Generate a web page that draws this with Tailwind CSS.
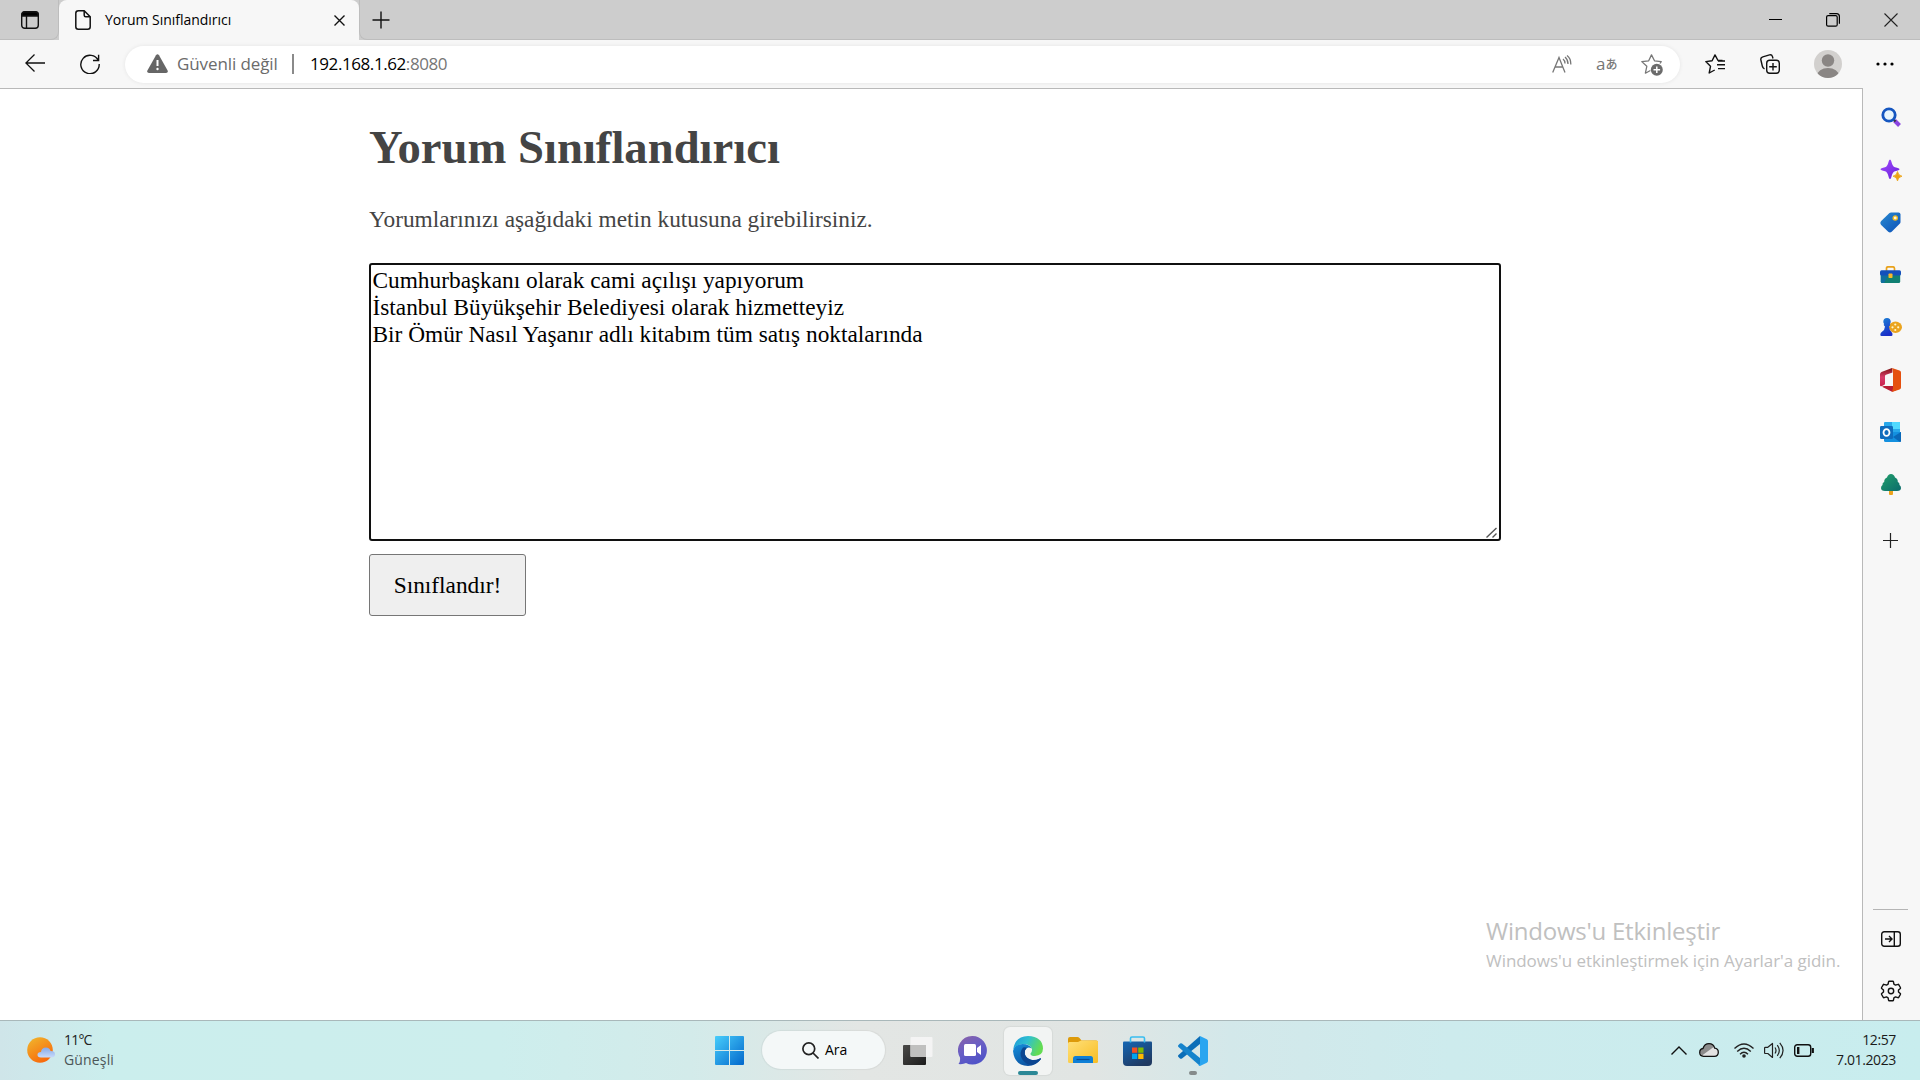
<!DOCTYPE html>
<html lang="tr">
<head>
<meta charset="utf-8">
<title>Yorum Sınıflandırıcı</title>
<script src="https://cdn.jsdelivr.net/npm/@tailwindcss/browser@4"></script>
</head>
<body class="flex h-[1080px] w-[1920px] flex-col overflow-hidden bg-white font-['Open_Sans',sans-serif] text-black">

<!-- Tab strip -->
<header class="flex h-10 shrink-0 items-center bg-[#cdcdcd]">
  <div class="flex h-10 w-[59px] items-center rounded-br-lg border-r border-b border-[#bdbdbd] pl-[21px]">
    <svg class="size-[18px]" viewBox="0 0 18 18" fill="none" stroke="#111" stroke-width="1.4"><rect x=".7" y=".7" width="16.6" height="16.6" rx="3"/><path d="M1 5V3.5Q1 1 3.500 1h11Q17 1 17 3.500V5z" fill="#000"/><path d="M5.500 5v12"/></svg>
  </div>
  <div class="flex h-10 w-[300px] items-center rounded-t-lg bg-[#f7f7f7] pl-4">
    <svg class="h-5 w-4" viewBox="0 0 16 20" fill="none" stroke="#111" stroke-width="1.5" stroke-linejoin="round"><path d="M3.500.8h5.700L15.200 6.800v9.900q0 2.500-2.500 2.500H3.300Q.8 19.200.8 16.700V3.300Q.8.800 3.500.8z"/><path d="M9.200.8v4.500q0 1.500 1.500 1.500h4.500"/></svg>
    <span class="ml-[14px] w-[229px] text-[14px] leading-5 tracking-[-0.02px] whitespace-nowrap">Yorum Sınıflandırıcı</span>
    <svg class="mt-px size-[11px]" viewBox="0 0 11 11" stroke="#111" stroke-width="1.4"><path d="M.5.5l10 10M10.500.5l-10 10"/></svg>
  </div>
  <div class="flex h-10 flex-1 items-center rounded-bl-lg border-b border-l border-[#bdbdbd]">
    <svg class="ml-3 size-[18px]" viewBox="0 0 18 18" stroke="#111" stroke-width="1.4"><path d="M9 .5v17M.5 9h17"/></svg>
    <div class="ml-auto flex items-center gap-[44px] pr-[22px]">
      <svg class="h-[14px] w-[13px]" viewBox="0 0 13 14"><path d="M0 6.500h13" stroke="#000"/></svg>
      <svg class="size-[14px]" viewBox="0 0 14 14" fill="none" stroke="#000" stroke-width="1.2"><rect x=".6" y="2.600" width="10.600" height="10.600" rx="1.500"/><path d="M3.300.6H10.500Q13.400.6 13.400 3.500v7.300"/></svg>
      <svg class="size-[14px]" viewBox="0 0 14 14" stroke="#222" stroke-width="1.1"><path d="M.5.5l13 13M13.500.5l-13 13"/></svg>
    </div>
  </div>
</header>

<!-- Toolbar -->
<nav class="flex h-12 shrink-0 items-center bg-[#f7f7f7] pl-[25px]">
  <svg class="mt-[-2px] h-[18px] w-5" viewBox="0 0 20 18" fill="none" stroke="#111" stroke-width="1.300"><path d="M20 9H.9M9.500.5L.9 9l8.600 8.500"/></svg>
  <svg class="ml-[35px] size-5" viewBox="0 0 20 20" fill="none" stroke="#111" stroke-width="1.400"><path d="M18.300 6.500A9.200 9.200 0 1 0 19.200 10M18.600.8v5.700h-5.600"/></svg>
  <div class="ml-[25px] flex h-[37px] w-[1555px] items-center rounded-full bg-white pl-[22px] shadow-[0_0_4px_rgba(0,0,0,0.08)]">
    <svg class="mb-px h-[19px] w-[21px]" viewBox="0 0 21 19"><path d="M9 1.200q1.500-2 3 0l8.600 15.300q.8 2.300-1.600 2.500H2Q-.4 18.800.4 16.500z" fill="#666"/><path d="M10.500 6v6" stroke="#fff" stroke-width="2"/><circle cx="10.500" cy="15" r="1.200" fill="#fff"/></svg>
    <span class="ml-[9px] w-[115px] text-[17px] leading-6 tracking-[-0.1px] whitespace-nowrap text-[#6b6b6b]">Güvenli değil</span>
    <span class="h-5 w-[2px] bg-[#8a8a8a]"></span>
    <span class="ml-4 text-[17px] leading-6 tracking-[-0.42px] whitespace-nowrap">192.168.1.62<span class="text-[#767676]">:8080</span></span>
    <div class="ml-auto flex items-center pr-[17px]">
      <svg class="h-[18px] w-5" viewBox="0 0 20 18" fill="none" stroke="#777" stroke-width="1.300"><path d="M.7 17.500L7 2.500l6 15M3 12h8.200M11 4q2 1.500 2 4.500M13 2q3 2.500 3 7M15 .5q4 3 3.800 9"/></svg>
      <span class="ml-6 flex h-5 w-[21px] items-center leading-5 text-[#777]"><span class="-mt-px text-[17px]">a</span><span class="text-[12px] font-['Noto_Sans_CJK_JP',sans-serif] font-medium">あ</span></span>
      <svg class="ml-6 mt-px size-[22px]" viewBox="0 0 22 22" fill="none" stroke="#777" stroke-width="1.300" stroke-linejoin="round"><path d="M19 9.500l1.200-1.900-6.700-.8L10.500.9 7.700 6.800.8 7.600l5 4.700-1.400 6.900 5-2.700"/><circle cx="15.800" cy="15.800" r="6" fill="#6b6b6b" stroke="none"/><path d="M15.800 12.500v6.600M12.500 15.800h6.600" stroke="#fff" stroke-width="1.500"/></svg>
    </div>
  </div>
  <svg class="ml-[25px] size-5" viewBox="0 0 20 20" fill="none" stroke="#111" stroke-width="1.400" stroke-linejoin="round"><path d="M17.500 6.500H13L10 .9 7.100 6.800.8 7.600l4.700 4.700L4.200 19l5.500-3M13 7h7M12 10.800h8M13 14.600h7"/></svg>
  <svg class="ml-[35px] size-5" viewBox="0 0 20 20" fill="none" stroke="#111" stroke-width="1.400"><path d="M4.500 15Q2.700 14 2.300 12L.9 6Q.3 3.500 2.800 2.800L9.500.9q2.300-.5 3 1.700L13 4.500"/><rect x="6.700" y="6.300" width="12.600" height="12.900" rx="3"/><path d="M13 9v7.500M9.200 12.750h7.600"/></svg>
  <svg class="ml-[34px] size-7" viewBox="0 0 28 28"><defs><clipPath id="av"><circle cx="14" cy="14" r="14"/></clipPath></defs><circle cx="14" cy="14" r="14" fill="#d2d0ce"/><g clip-path="url(#av)" fill="#8a8684"><circle cx="14" cy="10.500" r="6.200"/><ellipse cx="14" cy="26" rx="11" ry="8"/></g></svg>
  <svg class="ml-[34px] h-1 w-[18px]" viewBox="0 0 18 4"><circle cx="2" cy="2" r="1.600"/><circle cx="9" cy="2" r="1.600"/><circle cx="16" cy="2" r="1.600"/></svg>
</nav>

<!-- Page and sidebar -->
<div class="flex h-[932px] shrink-0">
  <main class="relative flex w-[1863px] flex-col items-start border-t border-r border-[#b9b9b9] pl-[369px] font-['Liberation_Serif',serif]">
    <h1 class="mt-[31px] text-[46.67px] leading-[55px] font-bold whitespace-nowrap text-[#444]">Yorum Sınıflandırıcı</h1>
    <p class="mt-[31px] text-[23.33px] leading-[27px] whitespace-nowrap text-[#444]">Yorumlarınızı aşağıdaki metin kutusuna girebilirsiniz.</p>
    <div class="relative mt-[30px] h-[278px] w-[1132px] rounded-[3px] border-2 border-[#101010] px-[1.500px] py-[2px] text-[23.33px] leading-[27px] whitespace-nowrap">
      <div>Cumhurbaşkanı olarak cami açılışı yapıyorum</div>
      <div>İstanbul Büyükşehir Belediyesi olarak hizmetteyiz</div>
      <div>Bir Ömür Nasıl Yaşanır adlı kitabım tüm satış noktalarında</div>
      <svg class="absolute right-[2px] bottom-px size-[11px]" viewBox="0 0 11 11" stroke="#555" stroke-width="1.400"><path d="M.5 10.500l10-9.500M6.500 10.500l4-4"/></svg>
    </div>
    <button class="mt-[13px] h-[62px] w-[157px] rounded-[3px] border border-[#767676] bg-[#efefef] text-[23.33px] whitespace-nowrap">Sınıflandır!</button>
    <div class="absolute right-[22px] bottom-[47px] w-[354px] font-['Open_Sans',sans-serif] whitespace-nowrap text-[#c0c0c0]">
      <div class="text-[24px] leading-[32px] tracking-[-0.23px]">Windows'u Etkinleştir</div>
      <div class="mt-[-2px] pt-[4px] text-[17px] leading-[24px] tracking-[-0.05px]">Windows'u etkinleştirmek için Ayarlar'a gidin.</div>
    </div>
  </main>
  <aside class="flex w-[57px] flex-col items-center bg-[#f7f7f7] pt-[3px] pr-[2px]">
    <div class="flex h-[52.5px] items-center"><svg class="size-5" viewBox="0 0 20 20"><path d="M13.500 13.500l5 5" stroke="#8b45e0" stroke-width="4"/><path d="M12 12l2.500 2.500" stroke="#333" stroke-width="2"/><circle cx="8" cy="8" r="6.200" fill="#e8f6fd" stroke="#1556c0" stroke-width="2.800"/></svg></div>
    <div class="flex h-[52.5px] items-center"><svg class="size-[22px]" viewBox="0 0 22 22"><defs><linearGradient id="sp" x2="1" y2="1"><stop stop-color="#a24bff"/><stop offset="1" stop-color="#6820d8"/></linearGradient></defs><path d="M10 .5Q11 .5 11.500 3 12.500 7.500 15 8.300q4.500 1 4.500 2t-4.500 2Q12.500 13 11.500 17.500 11 20 10 20T8.500 17.500Q7.500 13 5 12.300.5 11.300.5 10.300T5 8.300Q7.500 7.500 8.500 3 9 .5 10 .5z" fill="url(#sp)"/><path d="M17.500 12.500q.6 4 4.500 4.700-3.900.7-4.500 4.700-.6-4-4.500-4.700 3.900-.7 4.500-4.700z" fill="#eca316" stroke="#eca316" stroke-width=".8" stroke-linejoin="round"/></svg></div>
    <div class="flex h-[52.5px] items-center"><svg class="size-[21px]" viewBox="0 0 21 21"><defs><linearGradient id="tg" x2="1" y2="1"><stop stop-color="#2a8bd0"/><stop offset="1" stop-color="#0b4fb8"/></linearGradient></defs><path d="M11 .5h7.500q2 0 2 2V10q0 1-.8 1.800l-8 8q-1.700 1.500-3.500 0L1.200 13q-1.700-2 0-4L9.500 1.100Q10.200.5 11 .5z" fill="url(#tg)"/><circle cx="15.200" cy="6" r="2.100" fill="#fff8d8" stroke="#f2b91e" stroke-width="1.300"/></svg></div>
    <div class="flex h-[52.5px] items-center"><svg class="h-[17px] w-[21px]" viewBox="0 0 21 17"><path d="M6.500 5V2.500q0-1.700 1.700-1.700h4.600q1.700 0 1.700 1.700V5" fill="none" stroke="#e9a21b" stroke-width="1.700"/><path d="M.8 8h19.400v7.500q0 1.500-1.500 1.500H2.300q-1.500 0-1.500-1.500z" fill="#118073"/><path d="M.8 8H9l-5 9H2.300q-1.500 0-1.500-1.500z" fill="#116fa0"/><rect y="4.300" width="21" height="5.200" rx="1.500" fill="#1450bb"/><rect x="8.500" y="7.500" width="4" height="4.500" rx=".8" fill="#f7b929"/></svg></div>
    <div class="flex h-[52.5px] items-center"><svg class="h-[18px] w-[22px]" viewBox="0 0 22 18"><defs><linearGradient id="pw" x2=".4" y2="1"><stop stop-color="#1c86d6"/><stop offset="1" stop-color="#1a2fc8"/></linearGradient></defs><ellipse cx="15.500" cy="9.300" rx="6.500" ry="5.700" fill="#eba41f"/><circle cx="15.300" cy="6.500" r="1.100" fill="#fff6cc"/><circle cx="15.300" cy="12" r="1.100" fill="#fff6cc"/><circle cx="12.500" cy="9.300" r="1.100" fill="#fff6cc"/><circle cx="18.200" cy="9.300" r="1.100" fill="#fff6cc"/><path d="M7 0q3.700.3 3.700 3.700 0 1.500-.9 2.300.9.500.2 1.500L9 8.500q.3 3.500 2.500 5.500 1.300 1.500 1 3-.2 1-1.200 1H1.500q-1.200 0-1.200-1.200 0-2 1.700-3Q4.800 12 5 8.500L4 7.500q-.7-1 .2-1.500-.9-.8-.9-2.300Q3.300.3 7 0z" fill="url(#pw)"/></svg></div>
    <div class="flex h-[52.5px] items-center"><svg class="h-6 w-[21px]" viewBox="0 0 21 24"><defs><linearGradient id="of" y2="1" x2="0"><stop stop-color="#7d1414"/><stop offset=".5" stop-color="#d83b6a"/><stop offset="1" stop-color="#c8204a"/></linearGradient></defs><path d="M12 0L1.500 4Q0 4.700 0 6.500V17q0 1.800 1.500 1.200L4 17q1-.5 1-1.500V8q0-1 1-1.300L12.500 4.500z" fill="url(#of)"/><path d="M2 18.700l10 5 4-1.500V18H4z" fill="#b71c34"/><path d="M12 0l7.500 2.500Q21 3 21 4.500v15q0 1.500-1.500 2L12 24l1-4V4z" fill="#e5500f"/></svg></div>
    <div class="flex h-[52.5px] items-center"><svg class="h-5 w-[21px]" viewBox="0 0 21 20"><rect x="4" width="16" height="13" rx="1" fill="#28a8ea"/><path d="M12 0h7q1 0 1 1v6h-8z" fill="#50d9ff"/><path d="M4 10h17v8.500q0 1.500-1.500 1.500h-14Q4 20 4 18.500z" fill="#1490df"/><path d="M21 10l-8 5 7 5q1 0 1-1.500z" fill="#0a68b8"/><rect y="4" width="13" height="13" rx="1.200" fill="#0f6cbd"/><ellipse cx="6.500" cy="10.500" rx="3" ry="3.400" fill="none" stroke="#fff" stroke-width="1.800"/></svg></div>
    <div class="flex h-[52.5px] items-center"><svg class="h-[21px] w-5" viewBox="0 0 20 21"><defs><linearGradient id="tr" x2="1" y2="1"><stop stop-color="#22a06c"/><stop offset="1" stop-color="#0b6b6b"/></linearGradient></defs><rect x="8" y="15" width="4" height="6" rx="1" fill="#eca31c"/><path d="M10 0q3 0 4 3.500 3 1 2.800 4.500 2 .7 1.700 3Q20 12.200 20 14q0 3-4 3H4q-4 0-4-3 0-1.800 1.500-3-.3-2.300 1.700-3Q3 4.500 6 3.500 7 0 10 0z" fill="url(#tr)"/></svg></div>
    <svg class="mt-[22px] size-[15px]" viewBox="0 0 15 15" stroke="#222" stroke-width="1.200"><path d="M7.500 0v15M0 7.500h15"/></svg>
    <div class="mt-auto h-px w-[35px] bg-[#b5b5b5]"></div>
    <svg class="mt-[21px] h-4 w-5" viewBox="0 0 20 16" fill="none" stroke="#111" stroke-width="1.400"><rect x=".7" y=".7" width="18.600" height="14.600" rx="2.500"/><path d="M13.300 1v14M4 8h7M8 5l3 3-3 3"/></svg>
    <svg class="mt-[33px] mb-[18px] size-[22px]" viewBox="0 0 22 22" fill="none" stroke="#111" stroke-width="1.400" stroke-linejoin="round"><path d="M9.200 1.200h3.600q.5 0 .6.500l.5 2.500 1.600.9 2.400-.8q.5-.2.8.3l1.700 2.900q.3.500-.1.900L18.500 10v2l1.800 1.600q.4.400.1.900l-1.700 2.900q-.3.500-.8.300l-2.400-.8-1.600.9-.5 2.500q-.1.500-.6.500H9.200q-.5 0-.6-.5l-.5-2.500-1.600-.9-2.400.8q-.5.200-.8-.3l-1.700-2.900q-.3-.5.100-.9L3.500 12v-2L1.700 8.400q-.4-.4-.1-.9l1.700-2.900q.3-.5.800-.3l2.400.8 1.600-.9.500-2.500q.1-.4.600-.4z"/><circle cx="11" cy="11" r="2.700"/></svg>
  </aside>
</div>

<!-- Taskbar -->
<footer class="flex h-[60px] shrink-0 items-center border-t border-[#a9b8ba] bg-[linear-gradient(90deg,#cfe5e9_0px,#cbeeed_110px,#cdeeed_500px,#d3ebea_690px,#e3e6e4_860px,#e1e5e3_1090px,#d3e8ea_1230px,#cdebed_1450px,#c8edee_1920px)] pl-[27px]">
  <div class="flex w-[688px] items-center">
    <svg class="-mt-px h-[27px] w-7" viewBox="0 0 28 27"><defs><linearGradient id="sun" x2=".6" y2="1"><stop stop-color="#f0b92e"/><stop offset="1" stop-color="#f8690c"/></linearGradient><linearGradient id="cl" x2="0" y2="1"><stop stop-color="#86a9e8"/><stop offset="1" stop-color="#c8dbfa"/></linearGradient></defs><circle cx="13" cy="13" r="12.800" fill="url(#sun)"/><path d="M14 20.500q-3.500 0-3.500-2.700t3.500-2.800q.5-4.500 5-4.500 3.700 0 4.500 3.500 4.500 0 4.500 3.200t-3.500 3.300z" fill="url(#cl)"/></svg>
    <div class="-mt-[2px] ml-[9px] text-[14px] leading-5 whitespace-nowrap"><div class="tracking-[-0.800px] text-[#222]">11°C</div><div class="tracking-[0.150px] text-[#4c5658]">Güneşli</div></div>
  </div>
  <svg class="size-[29px]" viewBox="0 0 29 29"><defs><linearGradient id="wn" gradientUnits="userSpaceOnUse" x2="29" y2="29"><stop stop-color="#48cdfb"/><stop offset="1" stop-color="#0268cc"/></linearGradient></defs><path d="M1 0h13v14H0V1q0-1 1-1zM15 0h13q1 0 1 1v13H15zM0 15h14v14H1q-1 0-1-1zM15 15h14v13q0 1-1 1H15z" fill="url(#wn)"/></svg>
  <div class="-mt-px ml-[18px] flex h-[38px] w-[123px] items-center rounded-full bg-[#f4f8f8] pl-10 shadow-[0_0_1px_1px_rgba(0,0,0,0.05)]">
    <svg class="size-[17px]" viewBox="0 0 17 17" fill="none" stroke="#222" stroke-width="1.700"><circle cx="6.800" cy="6.800" r="5.900"/><path d="M11 11l5.500 5.500"/></svg>
    <span class="ml-[6px] text-[14px] leading-5">Ara</span>
  </div>
  <svg class="ml-[18px] h-7 w-[30px]" viewBox="0 0 30 28"><defs><linearGradient id="tv" x2="1" y2="1"><stop stop-color="#4a4a48"/><stop offset="1" stop-color="#1c1c1c"/></linearGradient></defs><rect y="8" width="23" height="20" rx="1" fill="url(#tv)"/><rect x="7.500" width="22" height="20" rx="1" fill="#f4f4f4"/><path d="M7.500 8H23v12H8.500q-1 0-1-1z" fill="#c0c0bf"/></svg>
  <svg class="ml-[25px] size-[29px]" viewBox="0 0 29 29"><defs><linearGradient id="ch" x2=".5" y2="1"><stop stop-color="#8c62a6"/><stop offset=".5" stop-color="#6a5fc4"/><stop offset="1" stop-color="#5053c8"/></linearGradient></defs><path d="M14.500 0A14.300 14.300 0 1 1 8 27Q5 28.500.5 28 2.500 26 2 21.500A14.300 14.300 0 0 1 14.500 0z" fill="url(#ch)"/><rect x="6" y="8" width="12" height="12" rx="1.500" fill="#fff"/><path d="M19 12l4-3v10l-4-3z" fill="#fff"/></svg>
  <div class="relative ml-[17px] flex size-12 items-center justify-center rounded-md bg-[#f2f4f3] shadow-[0_0_1px_1px_rgba(0,0,0,0.05)]">
    <svg class="size-[30px]" viewBox="0 0 30 30"><defs><linearGradient id="e1" x2="1" y2=".35"><stop stop-color="#1c97dc"/><stop offset=".5" stop-color="#2fc0cf"/><stop offset="1" stop-color="#63dc52"/></linearGradient><linearGradient id="e2" x2=".6" y2="1"><stop stop-color="#1590dc"/><stop offset="1" stop-color="#0c4f9e"/></linearGradient></defs><path d="M.2 13.500Q2 .2 15 0 29.500.5 30 12.500 29.800 19.500 22 20q-5-.2-4.500-2.500 1.800-1.500 1.500-4.500Q17.500 8.500 11 8 4 8 .2 13.500z" fill="url(#e1)"/><path d="M0 15Q1.500 8.500 9.500 8q7 0 9.200 4.500Q14 10 12 14.500q-1.500 7 6 9.300 4.500 1.200 9.500-1.500.8 0 .3 1Q23 30 15 30 1.500 29.500 0 15z" fill="url(#e2)"/><path d="M10 11.500Q5.500 17 9 23q3.500 5.500 9.500 6Q24 28 27.800 23.200q.5-1-.3-1Q22 24.700 18 23.800q-7.500-2.300-6-9.300.7-1.800 2-2.800-2-.9-4-.2z" fill="#0c4691"/></svg>
    <span class="absolute bottom-0 left-[14px] h-1 w-5 rounded-full bg-[#2b8896]"></span>
  </div>
  <svg class="ml-4 h-[27px] w-[30px]" viewBox="0 0 30 27"><defs><linearGradient id="fd" x2="1" y2="1"><stop stop-color="#ffe07a"/><stop offset="1" stop-color="#f8bd22"/></linearGradient></defs><path d="M0 2q0-2 2-2h7.500q1 0 2 1l2 2.500H28q2 0 2 2V9H0z" fill="#dd9a0a"/><path d="M0 6.500Q0 5 1.500 5H10l3-1.500h15.500q1.500 0 1.500 1.500v19.500q0 1.500-1.500 1.500h-27Q0 26 0 24.500z" fill="url(#fd)"/><path d="M5 26v-4.500q0-2.500 2.500-2.500h15q2.500 0 2.500 2.500V26z" fill="#0f7fd6"/><path d="M8.500 22.500h13" stroke="#084d94" stroke-width="1.200"/></svg>
  <svg class="ml-[25px] h-[30px] w-[29px]" viewBox="0 0 29 30"><defs><linearGradient id="st" x2=".6" y2="1"><stop stop-color="#1466b4"/><stop offset="1" stop-color="#203a62"/></linearGradient></defs><path d="M0 6.500q0-1 1-1h27q1 0 1 1V26q0 4-4 4H4q-4 0-4-4z" fill="url(#st)"/><path d="M7.500 6.500V2.500Q7.500 1 9 1h11q1.500 0 1.500 1.500v4" fill="none" stroke="#38bdf0" stroke-width="1.600"/><path d="M9 11.500h5.300v5.300H9z" fill="#f25022"/><path d="M15.200 11.500h5.300v5.300h-5.300z" fill="#7fba00"/><path d="M9 17.700h5.300V23H9z" fill="#00a4ef"/><path d="M15.200 17.700h5.300V23h-5.300z" fill="#ffb900"/></svg>
  <div class="relative ml-[26px]">
    <svg class="size-[30px]" viewBox="0 0 30 30"><path d="M22 0v8L4 22.500q-1 .7-2 0L.5 21q-1-1 0-2z" fill="#0b6eb8"/><path d="M22 30v-8L4 7.500q-1-.7-2 0L.5 9q-1 1 0 2z" fill="#1583cc"/><path d="M22 0l6.800 3.200Q30 3.800 30 5v20q0 1.200-1.200 1.800L22 30q-1 0-1.500-.8L22 28z" fill="#2aa5f0"/></svg>
    <span class="absolute top-[35px] left-[11px] h-1 w-2 rounded-full bg-[#858b8b]"></span>
  </div>
  <div class="ml-auto flex items-center pr-6">
    <svg class="h-[9px] w-4" viewBox="0 0 16 9" fill="none" stroke="#111" stroke-width="1.400"><path d="M.5 8.500L8 1l7.500 7.500"/></svg>
    <svg class="-mt-px ml-3 h-[14px] w-5" viewBox="0 0 20 14"><path d="M4.500 13.300Q.7 13 .7 9.500T4 5.500Q5.500.7 10 .7t5.700 4.500q3.600.5 3.600 4 0 4-4 4.100z" fill="#e2e2e2"/><path d="M1 10q-.5-4 3-4.500Q5.500.7 10 .7q3.500 0 5 3L3 12.500z" fill="#8c8c8c"/><path d="M4.500 13.300Q.7 13 .7 9.500T4 5.500Q5.500.7 10 .7t5.700 4.500q3.600.5 3.600 4 0 4-4 4.100z" fill="none" stroke="#111" stroke-width="1.300"/></svg>
    <svg class="ml-[15px] h-[15px] w-5" viewBox="0 0 20 15" fill="none" stroke="#222" stroke-width="1.400"><path d="M.5 5.500q9.500-9 19 0M3.200 8.500q6.800-6.500 13.600 0M6 11.200q4-3.700 8 0"/><circle cx="10" cy="13" r="1.800" fill="#222" stroke="none"/></svg>
    <svg class="ml-[10px] h-[17px] w-5" viewBox="0 0 20 17" fill="none" stroke="#222" stroke-width="1.200" stroke-linejoin="round"><path d="M.6 6q0-.7.700-.7h2.500L8.500 1.500v14L3.800 11.500H1.300q-.7 0-.7-.7zM11 5.500q2 3 0 6M13.300 3.200q4 5.300 0 10.600M15.800.8q6.500 7.700 0 15.400"/></svg>
    <svg class="ml-[10px] h-[13px] w-5" viewBox="0 0 20 13" fill="none" stroke="#111" stroke-width="1.400"><rect x=".7" y=".7" width="16" height="11.600" rx="2.500"/><path d="M4.200 3v7" stroke-width="2.400"/><path d="M18.800 4v5" stroke-width="2.200"/></svg>
    <div class="-mt-[2px] ml-[22px] flex w-[60px] flex-col items-end text-[14px] leading-5 tracking-[-0.380px] whitespace-nowrap text-[#1a1a1a]"><div>12:57</div><div>7.01.2023</div></div>
  </div>
</footer>
</body>
</html>
